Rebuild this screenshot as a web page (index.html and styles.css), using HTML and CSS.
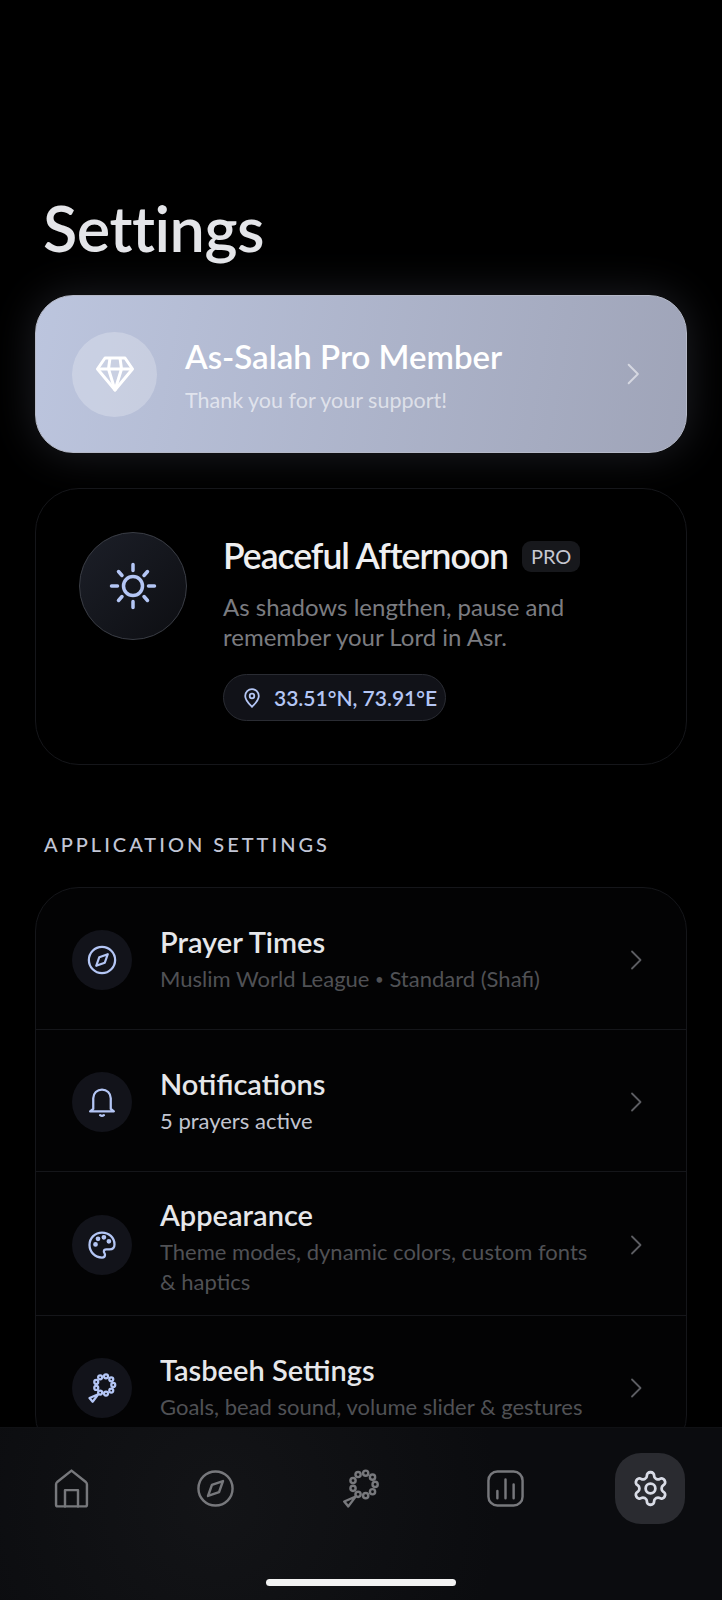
FILE: index.html
```html
<!DOCTYPE html>
<html>
<head>
    <meta charset="UTF-8">
    <link rel="stylesheet" href="styles.css">
</head>
<body>
<svg class="icon-defs" aria-hidden="true">
    <symbol id="i-compass" viewBox="0 0 24 24"><circle cx="12" cy="12" r="10.5"/><path d="M16.6 7.4 14.2 14.2 7.4 16.6 9.8 9.8z"/></symbol>
    <symbol id="i-bell" viewBox="0 0 24 24"><path d="M5 17.500V9a7 7 0 0 1 14 0v8.500l2.500 2H2.500z"/><path d="M10.500 22.500c.8.600 2.200.600 3 0"/></symbol>
    <symbol id="i-palette" viewBox="0 0 24 24"><path d="M12 2a10 10 0 0 0 0 20c1.700 0 2.400-1.100 2.400-2.200s-.9-1.700-.9-2.700c0-1.100.9-1.700 2-1.700h2.500c2.800 0 4-1.900 4-3.900C22 6 17.500 2 12 2z"/><circle cx="6.800" cy="11.500" r="1"/><circle cx="8.800" cy="7" r="1"/><circle cx="13.500" cy="5.800" r="1"/><circle cx="17.500" cy="9" r="1"/></symbol>
    <symbol id="i-beads" viewBox="0 0 24 24"><circle cx="21" cy="9.500" r="1.600"/><circle cx="19.400" cy="14" r="1.600"/><circle cx="15.200" cy="16.400" r="1.600"/><circle cx="10.500" cy="15.600" r="1.600"/><circle cx="7.400" cy="11.900" r="1.600"/><circle cx="7.400" cy="7.100" r="1.600"/><circle cx="10.500" cy="3.400" r="1.600"/><circle cx="15.200" cy="2.600" r="1.600"/><circle cx="19.400" cy="5" r="1.600"/><path d="M9 17 2 20l2.500 3z"/></symbol>
    <symbol id="i-home" viewBox="0 0 24 24"><path d="M2.500 9.500c0-.6.300-1.100.7-1.500L12 1l8.800 7c.4.400.7.900.7 1.500V22a1 1 0 0 1-1 1h-17a1 1 0 0 1-1-1z"/><path d="M8 23V13h8v10"/></symbol>
    <symbol id="i-chart" viewBox="0 0 24 24"><rect x="1.500" y="1.500" width="21" height="21" rx="5.500"/><path d="M7 18v-4.500M12 18V6.500M17 18V9.500"/></symbol>
    <symbol id="i-gear" viewBox="0 0 24 24"><path d="M12.220 2h-.44a2 2 0 0 0-2 2v.18a2 2 0 0 1-1 1.730l-.43.250a2 2 0 0 1-2 0l-.15-.08a2 2 0 0 0-2.730.730l-.22.380a2 2 0 0 0 .730 2.730l.15.100a2 2 0 0 1 1 1.720v.510a2 2 0 0 1-1 1.740l-.15.090a2 2 0 0 0-.730 2.730l.22.380a2 2 0 0 0 2.730.730l.15-.08a2 2 0 0 1 2 0l.43.250a2 2 0 0 1 1 1.730V20a2 2 0 0 0 2 2h.44a2 2 0 0 0 2-2v-.18a2 2 0 0 1 1-1.730l.43-.25a2 2 0 0 1 2 0l.15.080a2 2 0 0 0 2.730-.730l.22-.39a2 2 0 0 0-.73-2.730l-.15-.08a2 2 0 0 1-1-1.740v-.5a2 2 0 0 1 1-1.740l.15-.09a2 2 0 0 0 .73-2.730l-.22-.38a2 2 0 0 0-2.730-.73l-.15.08a2 2 0 0 1-2 0l-.43-.25a2 2 0 0 1-1-1.730V4a2 2 0 0 0-2-2z"/><circle cx="12" cy="12" r="3"/></symbol>
    <symbol id="i-chevron" viewBox="0 0 24 24"><path d="M8 3.500 16.500 12 8 20.500"/></symbol>
</svg>

<div class="screen">
    <main class="content">
        <h1 class="page-title">Settings</h1>

        <a class="pro-card">
            <span class="pro-icon">
                <svg class="diamond" viewBox="0 0 38 36"><path d="M9 2h20l7.500 11L19 34 1.500 13z"/><path d="M1.500 13h35M12.500 13 19 34l6.500-21M14 2l-1.500 11M24 2l1.500 11"/></svg>
            </span>
            <span class="pro-text">
                <span class="pro-title">As-Salah Pro Member</span>
                <span class="pro-sub">Thank you for your support!</span>
            </span>
            <svg class="chevron chevron-pro"><use href="#i-chevron"/></svg>
        </a>

        <section class="greeting-card">
            <div class="sun-badge">
                <svg class="sun" viewBox="0 0 48 48"><circle cx="24" cy="24" r="9.500"/><path d="M24 2.500v6M24 39.500v6M2.500 24h6M39.500 24h6M9.500 9.500l3.500 4M38.500 9.500l-3.500 4M9.500 38.500l3.500-4M38.500 38.500l-3.500-4"/></svg>
            </div>
            <div class="greeting-body">
                <div class="greeting-head">
                    <h2 class="greeting-title">Peaceful Afternoon</h2>
                    <span class="pro-tag">PRO</span>
                </div>
                <p class="greeting-text">As shadows lengthen, pause and remember your Lord in Asr.</p>
                <div class="location-pill">
                    <svg class="pin" viewBox="0 0 16 20"><path d="M8 1.200a6.800 6.800 0 0 0-6.800 6.800c0 4.400 4.300 8.300 6.800 10.800 2.500-2.500 6.800-6.400 6.800-10.800A6.800 6.800 0 0 0 8 1.200z"/><circle cx="8" cy="8" r="2.300"/></svg>
                    <span>33.51°N, 73.91°E</span>
                </div>
            </div>
        </section>

        <h3 class="section-label">APPLICATION SETTINGS</h3>

        <div class="settings-list">
            <a class="settings-row">
                <span class="row-icon"><svg><use href="#i-compass"/></svg></span>
                <span class="row-text">
                    <span class="row-title">Prayer Times</span>
                    <span class="row-sub">Muslim World League <span class="dot">•</span> Standard (Shafi)</span>
                </span>
                <svg class="chevron"><use href="#i-chevron"/></svg>
            </a>
            <a class="settings-row">
                <span class="row-icon"><svg><use href="#i-bell"/></svg></span>
                <span class="row-text">
                    <span class="row-title">Notifications</span>
                    <span class="row-sub row-sub-active">5 prayers active</span>
                </span>
                <svg class="chevron"><use href="#i-chevron"/></svg>
            </a>
            <a class="settings-row">
                <span class="row-icon"><svg><use href="#i-palette"/></svg></span>
                <span class="row-text row-text-tall">
                    <span class="row-title">Appearance</span>
                    <span class="row-sub">Theme modes, dynamic colors, custom fonts &amp; haptics</span>
                </span>
                <svg class="chevron"><use href="#i-chevron"/></svg>
            </a>
            <a class="settings-row">
                <span class="row-icon"><svg><use href="#i-beads"/></svg></span>
                <span class="row-text">
                    <span class="row-title">Tasbeeh Settings</span>
                    <span class="row-sub">Goals, bead sound, volume slider &amp; gestures</span>
                </span>
                <svg class="chevron"><use href="#i-chevron"/></svg>
            </a>
        </div>
    </main>

    <nav class="bottom-nav">
        <div class="nav-items">
            <a class="nav-item"><svg><use href="#i-home"/></svg></a>
            <a class="nav-item"><svg><use href="#i-compass"/></svg></a>
            <a class="nav-item"><svg><use href="#i-beads"/></svg></a>
            <a class="nav-item"><svg><use href="#i-chart"/></svg></a>
            <a class="nav-item active"><svg><use href="#i-gear"/></svg></a>
        </div>
        <div class="home-bar"></div>
    </nav>
</div>
</body>
</html>
```

FILE: styles.css
```css
:root {
    --accent: #b4c6f5;
    --border: #15161a;
    --nav-icon: #77787c;
}

* {
    margin: 0;
    padding: 0;
    box-sizing: border-box;
}

body {
    width: 722px;
    height: 1600px;
    background: #000;
    color: #fff;
    font-family: 'Lato', 'Noto Sans', sans-serif;
    overflow: hidden;
}

.icon-defs {
    display: none;
}

.screen {
    display: flex;
    flex-direction: column;
    height: 1600px;
}

.content {
    height: 1427px;
    padding: 193px 35px 0;
    overflow: hidden;
}

.page-title {
    height: 70px;
    margin-left: 8px;
    font-size: 63px;
    line-height: 70px;
    font-weight: 600;
    color: #e4e5e9;
    letter-spacing: -0.5px;
}

/* pro banner */
.pro-card {
    display: flex;
    align-items: center;
    height: 158px;
    margin-top: 32px;
    padding: 0 40px 0 36px;
    border-radius: 38px;
    border: 1px solid #b5b9c8;
    background: linear-gradient(100deg, #bcc5de, #9fa4b8);
    box-shadow: 0 0 44px rgba(190, 200, 235, 0.16);
}

.pro-icon {
    display: flex;
    align-items: center;
    justify-content: center;
    width: 85px;
    height: 85px;
    border-radius: 50%;
    background: rgba(255, 255, 255, 0.24);
}

.diamond {
    width: 38px;
    height: 36px;
    fill: none;
    stroke: #fff;
    stroke-width: 3;
    stroke-linejoin: round;
}

.pro-text {
    display: flex;
    flex-direction: column;
    flex: 1;
    margin-left: 28px;
    gap: 11px;
    padding-top: 3px;
}

.pro-title {
    font-size: 33px;
    line-height: 38px;
    font-weight: 600;
}

.pro-sub {
    font-size: 21.500px;
    line-height: 28px;
    color: rgba(255, 255, 255, 0.62);
}

.chevron {
    width: 24px;
    height: 24px;
    fill: none;
    stroke: #5c5d62;
    stroke-width: 1.800;
    stroke-linecap: round;
    stroke-linejoin: round;
    flex-shrink: 0;
}

.chevron-pro {
    width: 26px;
    height: 26px;
    stroke: rgba(255, 255, 255, 0.55);
}

/* greeting */
.greeting-card {
    display: flex;
    height: 277px;
    margin-top: 35px;
    padding: 43px 43px 0;
    border: 1.500px solid var(--border);
    border-radius: 44px;
    background: #000;
}

.sun-badge {
    display: flex;
    align-items: center;
    justify-content: center;
    width: 108px;
    height: 108px;
    border-radius: 50%;
    border: 1.500px solid #3a3d45;
    background: linear-gradient(135deg, #1c1f28, #0d0e12);
    flex-shrink: 0;
}

.sun {
    width: 48px;
    height: 48px;
    fill: none;
    stroke: var(--accent);
    stroke-width: 3.500;
    stroke-linecap: round;
}

.greeting-body {
    margin-left: 36px;
}

.greeting-head {
    display: flex;
    align-items: center;
    gap: 14px;
    margin-top: 7px;
}

.greeting-title {
    font-size: 35.500px;
    line-height: 34px;
    font-weight: 600;
    letter-spacing: -1px;
    color: #efeff1;
}

.pro-tag {
    padding: 0 9px;
    height: 31px;
    line-height: 31px;
    border-radius: 9px;
    background: #17181c;
    color: #c6c8d0;
    font-size: 20px;
}

.greeting-text {
    width: 370px;
    margin-top: 19px;
    font-size: 24px;
    line-height: 30px;
    color: #7b7c80;
}

.location-pill {
    display: inline-flex;
    align-items: center;
    gap: 14px;
    height: 47px;
    margin-top: 22px;
    padding: 0 8px 0 20px;
    border: 1.500px solid #2a2c33;
    border-radius: 24px;
    background: #111218;
    color: var(--accent);
    font-size: 21px;
    font-weight: 600;
}

.pin {
    width: 16px;
    height: 20px;
    fill: none;
    stroke: var(--accent);
    stroke-width: 1.800;
}

/* settings list */
.section-label {
    margin: 66px 0 0 9px;
    font-size: 20px;
    line-height: 26px;
    font-weight: 500;
    letter-spacing: 3px;
    color: #c2c6d6;
}

.settings-list {
    margin-top: 30px;
    border: 1.500px solid var(--border);
    border-radius: 44px;
    background: #030304;
}

.settings-row {
    display: flex;
    align-items: center;
    min-height: 142px;
    padding: 20px 38px 18px 36px;
    border-bottom: 1.500px solid var(--border);
}

.row-icon {
    display: flex;
    align-items: center;
    justify-content: center;
    width: 60px;
    height: 60px;
    border-radius: 50%;
    background: #12131a;
    flex-shrink: 0;
}

.row-icon svg {
    width: 30px;
    height: 30px;
    fill: none;
    stroke: var(--accent);
    stroke-width: 1.800;
    stroke-linejoin: round;
    stroke-linecap: round;
}

.row-text {
    display: flex;
    flex-direction: column;
    flex: 1;
    margin-left: 28px;
    margin-right: 20px;
}

.row-text-tall {
    padding-top: 6px;
}

.row-title {
    font-size: 29px;
    line-height: 34px;
    font-weight: 600;
    color: #e6e7ea;
}

.row-sub {
    margin-top: 5px;
    font-size: 22px;
    line-height: 30px;
    color: #505155;
}

.row-sub-active {
    color: #c2c5d0;
}

.dot {
    font-size: 15px;
    vertical-align: 2px;
}

/* bottom nav */
.bottom-nav {
    flex: 1;
    display: flex;
    flex-direction: column;
    background: radial-gradient(circle at 30% 45%, #131417, #0b0c0f 55%);
    border-top: 1px solid #101114;
}

.nav-items {
    display: flex;
    justify-content: space-between;
    align-items: center;
    height: 72px;
    margin-top: 24px;
    padding: 0 37px 0 36px;
}

.nav-item {
    display: flex;
    align-items: center;
    justify-content: center;
    width: 70px;
    height: 71px;
    border-radius: 26px;
}

.nav-item svg {
    width: 39px;
    height: 39px;
    fill: none;
    stroke: var(--nav-icon);
    stroke-width: 1.500;
    stroke-linejoin: round;
    stroke-linecap: round;
}

.nav-item.active {
    background: #2a2b30;
}

.nav-item.active svg {
    stroke: #d9dce6;
    stroke-width: 1.700;
}

.home-bar {
    width: 190px;
    height: 7px;
    margin: 55px auto 0;
    border-radius: 4px;
    background: #f2f2f2;
}
```
